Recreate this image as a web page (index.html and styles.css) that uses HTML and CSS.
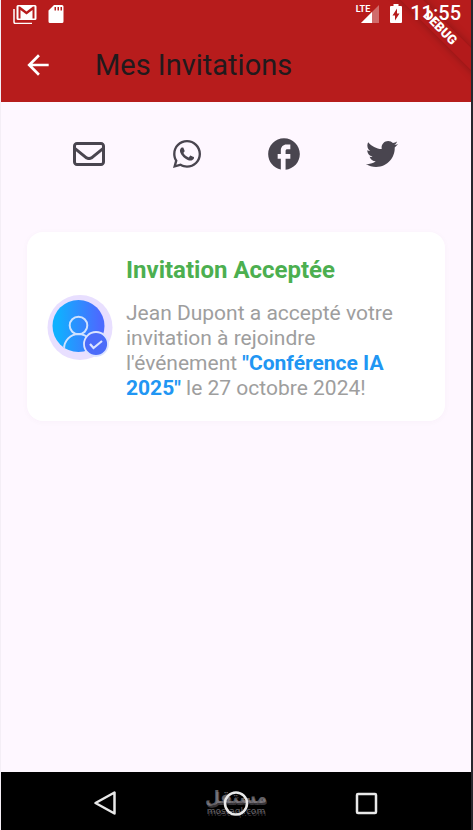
FILE: index.html
```html
<!DOCTYPE html>
<html lang="fr">
<head>
<meta charset="utf-8">
<meta name="viewport" content="width=device-width, initial-scale=1">
<title>Mes Invitations</title>
<link rel="stylesheet" href="styles.css">
</head>
<body>
<div class="screen">
  <header class="top">
    <div class="status">
      <svg class="status-icon" width="24" height="20" viewBox="0 0 24 20" aria-hidden="true">
        <path d="M1 5v13a1.500 1.500 0 0 0 1.500 1.500H19" fill="none" stroke="#fff" stroke-width="1.500"/>
        <path fill="#fff" fill-rule="evenodd" d="M5 1h17a1.500 1.500 0 0 1 1.500 1.500v12A1.500 1.500 0 0 1 22 16H5a1.500 1.500 0 0 1-1.500-1.500v-12A1.500 1.500 0 0 1 5 1zm.5 1.500v12h2V6l6 4.500L19.500 6v8.500h2v-12h-1.500l-6.500 5-6.500-5z"/>
      </svg>
      <svg class="status-icon" width="16" height="20" viewBox="0 0 16 20" aria-hidden="true">
        <path fill="#fff" fill-rule="evenodd" d="M6 1h8a1.500 1.500 0 0 1 1.500 1.500v15A1.500 1.500 0 0 1 14 19H2a1.500 1.500 0 0 1-1.500-1.500V6.500zm.5 2v3.500H8V3zm3 0v3.500H11V3zm3 0v3.500H14V3z"/>
      </svg>
      <span class="network"><span class="lte">LTE</span>
        <svg width="20" height="20" viewBox="0 0 20 20" aria-hidden="true">
          <path d="M19 1v18H1z" fill="#fff" opacity=".35"/><path d="M12 8v11H1z" fill="#fff"/>
        </svg>
      </span>
      <svg class="battery" width="14" height="20" viewBox="0 0 14 20" aria-hidden="true">
        <path fill="#fff" fill-rule="evenodd" d="M4.500 0h5v2H12a1 1 0 0 1 1 1v15a1 1 0 0 1-1 1H2a1 1 0 0 1-1-1V3a1 1 0 0 1 1-1h2.500zM8 4.500l-4.500 7H6v5l4.500-7H8z"/>
      </svg>
      <time class="clock">11:55</time>
    </div>
    <div class="appbar">
      <button class="back" type="button" aria-label="Retour">
        <svg width="32" height="32" viewBox="0 0 24 24"><path fill="#fff" d="M20 11H7.830l5.590-5.590L12 4l-8 8 8 8 1.410-1.410L7.830 13H20z"/></svg>
      </button>
      <h1>Mes Invitations</h1>
    </div>
    <div class="ribbon">DEBUG</div>
  </header>

  <main>
    <nav class="share" aria-label="Partager">
      <button type="button" aria-label="E-mail">
        <svg width="32" height="32" viewBox="0 0 512 512"><path d="M64 112c-8.800 0-16 7.200-16 16v22.100L220.500 291.700c20.700 17 50.400 17 71.100 0L464 150.100V128c0-8.800-7.200-16-16-16H64zM48 212.200V384c0 8.800 7.200 16 16 16H448c8.800 0 16-7.200 16-16V212.200L322 328.800c-38.400 31.500-93.700 31.500-132 0L48 212.200zM0 128C0 92.700 28.700 64 64 64H448c35.300 0 64 28.700 64 64V384c0 35.300-28.700 64-64 64H64c-35.300 0-64-28.700-64-64V128z"/></svg>
      </button>
      <button type="button" aria-label="WhatsApp">
        <svg width="28" height="32" viewBox="0 0 448 512"><path d="M380.900 97.100C339 55.100 283.200 32 223.900 32c-122.400 0-222 99.600-222 222 0 39.100 10.200 77.300 29.600 111L0 480l117.700-30.900c32.400 17.700 68.900 27 106.100 27h.1c122.300 0 224.100-99.600 224.100-222 0-59.300-25.200-115-67.100-157zm-157 341.600c-33.200 0-65.700-8.900-94-25.700l-6.700-4-69.800 18.300L72 359.200l-4.400-7c-18.500-29.400-28.200-63.300-28.200-98.200 0-101.700 82.800-184.500 184.600-184.500 49.300 0 95.600 19.200 130.400 54.100 34.800 34.900 56.200 81.200 56.100 130.500 0 101.800-84.900 184.600-186.600 184.600zm101.200-138.200c-5.500-2.800-32.800-16.200-37.900-18-5.100-1.900-8.800-2.800-12.500 2.800-3.700 5.600-14.300 18-17.600 21.800-3.200 3.700-6.500 4.200-12 1.400-32.600-16.300-54-29.100-75.500-66-5.700-9.800 5.700-9.100 16.300-30.300 1.800-3.700.9-6.900-.5-9.700-1.400-2.800-12.500-30.100-17.100-41.200-4.500-10.800-9.100-9.300-12.500-9.500-3.200-.2-6.900-.2-10.600-.2-3.700 0-9.700 1.400-14.800 6.900-5.100 5.600-19.400 19-19.400 46.300 0 27.300 19.900 53.700 22.600 57.400 2.800 3.700 39.100 59.700 94.800 83.800 35.200 15.200 49 16.500 66.600 13.900 10.700-1.600 32.800-13.400 37.400-26.400 4.600-13 4.600-24.100 3.200-26.400-1.300-2.500-5-3.900-10.500-6.600z"/></svg>
      </button>
      <button type="button" aria-label="Facebook">
        <svg width="38" height="38" viewBox="0 0 24 24"><path d="M22 12c0-5.520-4.480-10-10-10S2 6.480 2 12c0 4.840 3.440 8.870 8 9.800V15H8v-3h2V9.500C10 7.570 11.570 6 13.500 6H16v3h-2c-.55 0-1 .45-1 1v2h3v3h-3v6.950c5.050-.5 9-4.760 9-9.950z"/></svg>
      </button>
      <button type="button" aria-label="Twitter">
        <svg width="32" height="32" viewBox="0 0 512 512"><path d="M459.370 151.716c.325 4.548.325 9.097.325 13.645 0 138.720-105.583 298.558-298.558 298.558-59.452 0-114.680-17.219-161.137-47.106 8.447.974 16.568 1.299 25.340 1.299 49.055 0 94.213-16.568 130.274-44.832-46.132-.975-84.792-31.188-98.112-72.772 6.498.974 12.995 1.624 19.818 1.624 9.421 0 18.843-1.300 27.614-3.573-48.081-9.747-84.143-51.980-84.143-102.985v-1.299c13.969 7.797 30.214 12.670 47.431 13.319-28.264-18.843-46.781-51.005-46.781-87.391 0-19.492 5.197-37.360 14.294-52.954 51.655 63.675 129.300 105.258 216.365 109.807-1.624-7.797-2.599-15.918-2.599-24.040 0-57.828 46.782-104.934 104.934-104.934 30.213 0 57.502 12.670 76.670 33.137 23.715-4.548 46.456-13.320 66.599-25.340-7.798 24.366-24.366 44.833-46.132 57.827 21.117-2.273 41.584-8.122 60.426-16.243-14.292 20.791-32.161 39.308-52.628 54.253z"/></svg>
      </button>
    </nav>

    <article class="card">
      <svg class="avatar" width="66" height="66" viewBox="0 0 66 66" aria-hidden="true">
        <defs><linearGradient id="blue"><stop offset=".1" stop-color="#10b0ff"/><stop offset=".9" stop-color="#4b6bff"/></linearGradient>
        <clipPath id="disc"><circle cx="31.500" cy="32" r="26"/></clipPath></defs>
        <circle cx="33" cy="33.500" r="32.500" fill="#e8dfff"/>
        <circle cx="31.500" cy="32" r="26" fill="url(#blue)"/>
        <g clip-path="url(#disc)" fill="none" stroke="#cfe2ff" stroke-width="2">
          <circle cx="31.500" cy="31.500" r="8.800"/>
          <path d="M17 57v-2a14.500 15 0 0 1 29 0v2"/>
        </g>
        <circle cx="49" cy="50" r="12" fill="#4b6cf9" stroke="#dce4ff" stroke-width="1.800"/>
        <path d="M43 50l3.500 4 8.500-7" fill="none" stroke="#dce4ff" stroke-width="2.200"/>
      </svg>
      <div class="message">
        <h2>Invitation Acceptée</h2>
        <p>Jean Dupont a accepté votre invitation à rejoindre l'événement <strong>"Conférence IA 2025"</strong> le 27 octobre 2024!</p>
      </div>
    </article>
  </main>

  <footer class="navbar">
    <button type="button" aria-label="Précédent">
      <svg width="26" height="26" viewBox="0 0 26 26"><path d="M22.500 2.500v21L3.500 13z"/></svg>
    </button>
    <button type="button" aria-label="Accueil">
      <svg width="26" height="26" viewBox="0 0 26 26"><circle cx="13" cy="13.500" r="11"/></svg>
    </button>
    <button type="button" aria-label="Applications récentes">
      <svg width="26" height="26" viewBox="0 0 26 26"><rect x="3" y="4" width="19" height="19" rx="1"/></svg>
    </button>
    <div class="mark"><span class="mark-name" lang="ar" dir="rtl">مستقل</span><span class="mark-site">mostaql.com</span></div>
  </footer>
</div>
</body>
</html>
```
FILE: styles.css
```css
* { box-sizing: border-box; }

body {
  margin: 0;
  font-family: Roboto, "Liberation Sans", sans-serif;
  background: #fef7ff;
}

button {
  display: flex;
  align-items: center;
  justify-content: center;
  padding: 0;
  border: 0;
  background: none;
}

h1, h2, p { margin: 0; }

.screen {
  display: flex;
  flex-direction: column;
  min-height: 100vh;
  border-left: 1px solid #f4eef6;
  border-right: 2px solid #26282e;
}

.top {
  position: relative;
  overflow: hidden;
  background: #b71c1c;
}

.status {
  position: relative;
  z-index: 1;
  display: flex;
  align-items: center;
  height: 27px;
  padding: 0 10px 0 12px;
  color: #fff;
}

.status-icon { margin-right: 11px; }

.network {
  display: flex;
  align-items: center;
  margin-left: auto;
}

.lte {
  align-self: flex-start;
  margin-right: -10px;
  font: 700 9px/10px "Liberation Sans Narrow", Roboto, sans-serif;
}

.battery { margin: 0 7px 0 9px; }

.clock {
  font-size: 20px;
  font-weight: 500;
  line-height: 27px;
}

.appbar {
  display: flex;
  align-items: center;
  height: 75px;
  padding-left: 13px;
}

.back {
  width: 48px;
  height: 48px;
  margin-right: 33px;
}

h1 {
  color: #211a1c;
  font-size: 29px;
  font-weight: 400;
  line-height: 36px;
}

.ribbon {
  position: absolute;
  top: 20px;
  right: -31px;
  width: 124px;
  color: #fff;
  background: #b31a1b;
  box-shadow: 0 0 8px rgba(0, 0, 0, .25);
  font-size: 13px;
  font-weight: 900;
  line-height: 16px;
  text-align: center;
  transform: rotate(45deg);
}

main { flex: 1; }

.share {
  display: grid;
  grid-template-columns: repeat(4, 1fr);
  padding: 28px 40px 0 39px;
}

.share button { height: 48px; }
.share svg { fill: #49454f; }

.card {
  display: flex;
  align-items: center;
  gap: 13px;
  margin: 54px 26px 0;
  padding: 20px;
  border-radius: 16px;
  background: #fff;
  box-shadow: 0 1px 6px rgba(80, 40, 100, .03);
}

.avatar { flex: none; }

h2 {
  margin-bottom: 13px;
  color: #4caf50;
  font-size: 24px;
  font-weight: 700;
  line-height: 36px;
}

p {
  color: #9e9e9e;
  font-size: 21px;
  line-height: 25px;
}

strong {
  color: #2196f3;
  font-weight: 700;
}

.navbar {
  position: relative;
  display: flex;
  align-items: center;
  justify-content: space-between;
  height: 58px;
  padding: 4px 91px 0;
  background: #000;
}

.navbar button {
  position: relative;
  z-index: 1;
}

.navbar svg {
  fill: none;
  stroke: #e8e8e8;
  stroke-width: 2.5;
  stroke-linejoin: round;
}

.mark {
  position: absolute;
  inset: 0;
  display: flex;
  flex-direction: column;
  align-items: center;
  justify-content: center;
  color: rgba(165, 160, 168, .6);
  text-shadow: 1px 2px rgba(110, 105, 112, .5);
  pointer-events: none;
}

.mark-name {
  font: 700 17px/20px "DejaVu Sans", sans-serif;
}

.mark-site {
  font: 9px/9px "DejaVu Sans", sans-serif;
}
```
